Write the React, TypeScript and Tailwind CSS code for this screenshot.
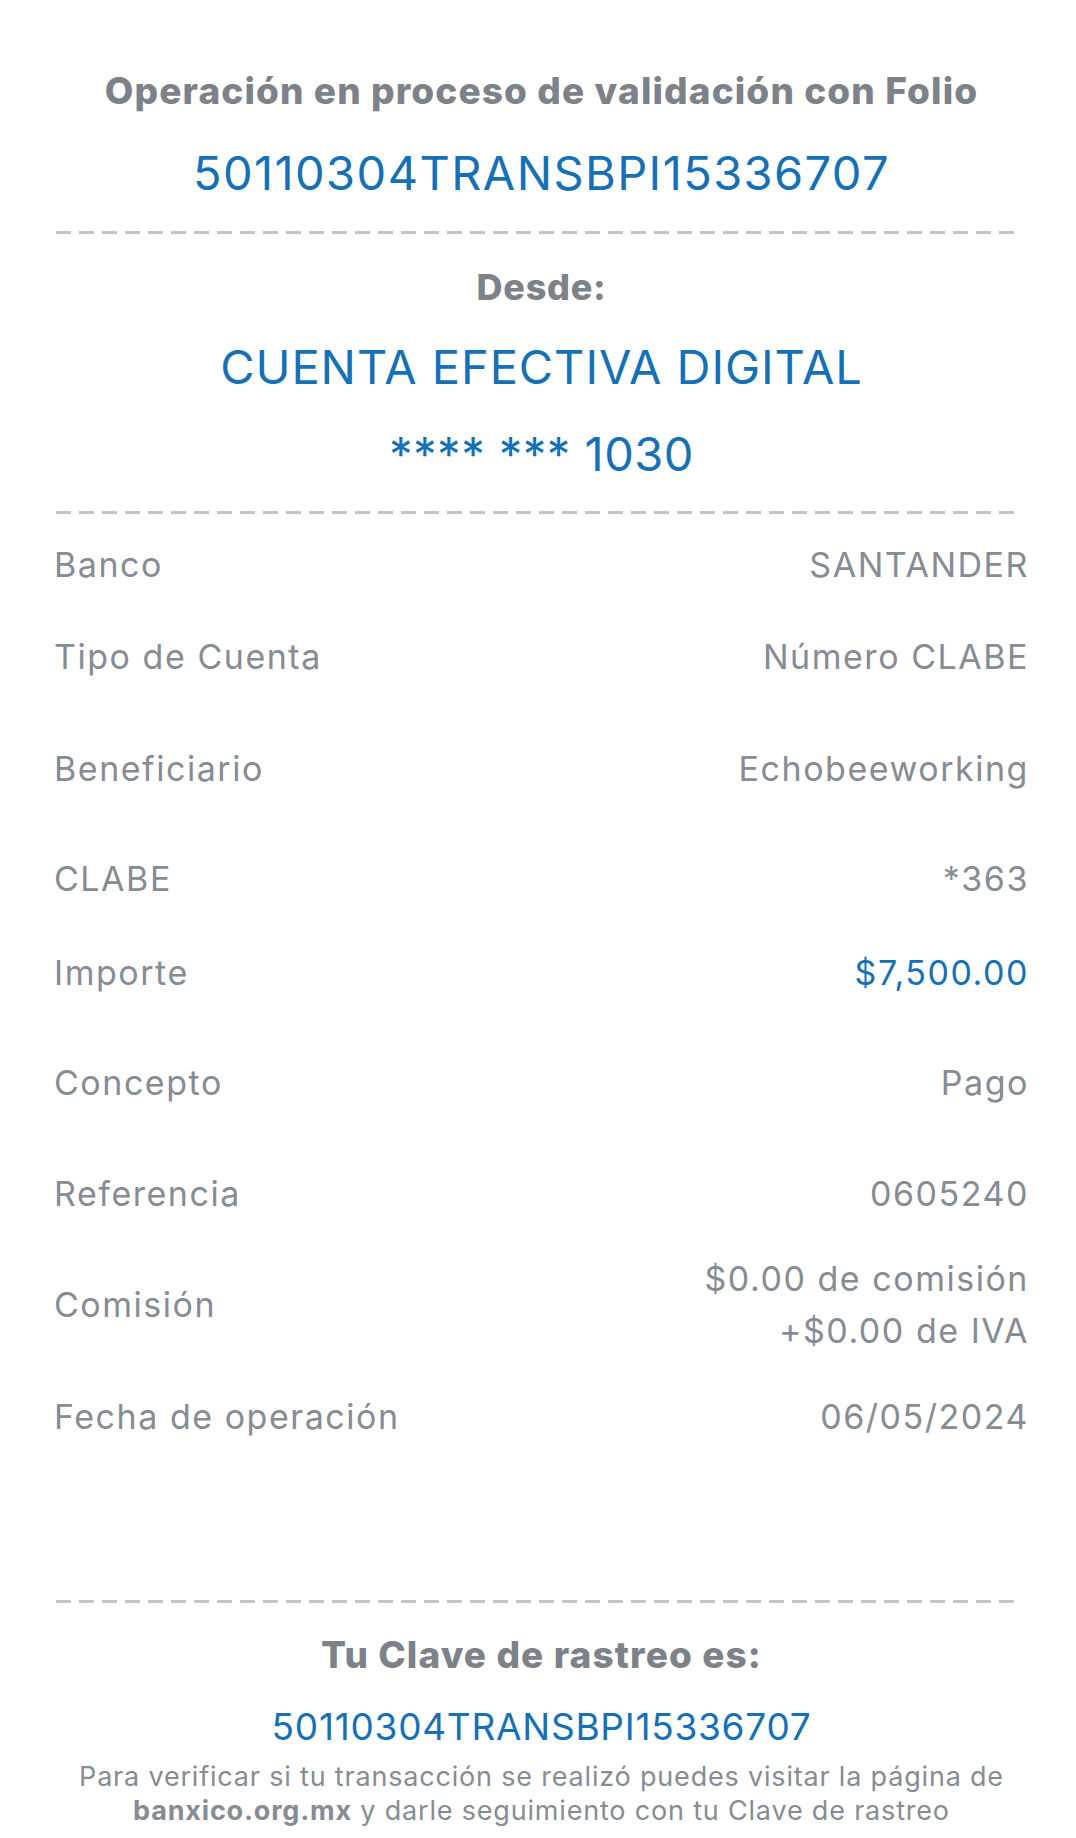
const FOLIO = "50110304TRANSBPI15336707";

const Dash = ({ className = "" }: { className?: string }) => (
  <div
    className={`ml-[2px] mr-[9px] h-[3px] bg-[repeating-linear-gradient(90deg,#c3c4c6_0px,#c3c4c6_15px,transparent_15px,transparent_23px)] ${className}`}
  />
);

interface RowProps {
  label: string;
  value: React.ReactNode;
  blue?: boolean;
  className?: string;
}

const Row = ({ label, value, blue, className = "" }: RowProps) => (
  <div className={`flex items-center justify-between ${className}`}>
    <span className="text-[34px] leading-[44px] tracking-[0.045em] text-[#868c94]">{label}</span>
    <span
      className={`text-right text-[34px] leading-[44px] tracking-[0.045em] ${blue ? "text-[#1670b5]" : "text-[#868c94]"}`}
    >
      {value}
    </span>
  </div>
);

const App = () => {
  return (
    <div className="min-h-[1838px] bg-white pl-[54px] pr-[47px] font-['Inter',sans-serif]">
      <div className="flex flex-col items-center pt-[70px]">
        <h1 className="whitespace-nowrap text-[37px] font-extrabold leading-[42px] tracking-[0.03em] text-[#7d8289]">
          Operación en proceso de validación con Folio
        </h1>
        <p className="mt-[33px] text-[47px] leading-[56px] tracking-[0.03em] text-[#1670b5]">{FOLIO}</p>
      </div>

      <Dash className="mt-[30px]" />

      <div className="flex flex-col items-center">
        <h2 className="mt-[32px] text-[36px] font-extrabold leading-[42px] tracking-[0.02em] text-[#7d8289]">
          Desde:
        </h2>
        <p className="mt-[31px] text-[47px] leading-[56px] tracking-[0.02em] text-[#1670b5]">
          CUENTA EFECTIVA DIGITAL
        </p>
        <p className="mt-[31px] text-[47px] leading-[56px] tracking-[0.01em] text-[#1670b5]">**** *** 1030</p>
      </div>

      <Dash className="mt-[29px]" />

      <div className="flex flex-col">
        <Row label="Banco" value="SANTANDER" className="mt-[29px]" />
        <Row label="Tipo de Cuenta" value="Número CLABE" className="mt-[48px]" />
        <Row label="Beneficiario" value="Echobeeworking" className="mt-[68px]" />
        <Row label="CLABE" value="*363" className="mt-[66px]" />
        <Row label="Importe" value="$7,500.00" blue className="mt-[50px]" />
        <Row label="Concepto" value="Pago" className="mt-[66px]" />
        <Row label="Referencia" value="0605240" className="mt-[67px]" />
        <div className="mt-[37px] flex items-center justify-between">
          <span className="text-[34px] leading-[44px] tracking-[0.045em] text-[#868c94]">Comisión</span>
          <div className="flex flex-col items-end text-[34px] leading-[52px] tracking-[0.045em] text-[#868c94]">
            <span>$0.00 de comisión</span>
            <span>+$0.00 de IVA</span>
          </div>
        </div>
        <Row label="Fecha de operación" value="06/05/2024" className="mt-[38px]" />
      </div>

      <Dash className="mt-[161px]" />

      <div className="flex flex-col items-center">
        <h2 className="mt-[31px] text-[37px] font-extrabold leading-[42px] tracking-[0.03em] text-[#7d8289]">
          Tu Clave de rastreo es:
        </h2>
        <p className="mt-[29px] text-[37px] leading-[44px] tracking-[0.02em] text-[#1670b5]">{FOLIO}</p>
        <p className="mt-[11px] whitespace-nowrap text-center text-[27px] leading-[34px] tracking-[0.03em] text-[#868c94]">
          Para verificar si tu transacción se realizó puedes visitar la página de
          <br />
          <span className="font-bold">banxico.org.mx</span> y darle seguimiento con tu Clave de rastreo
        </p>
      </div>
    </div>
  );
};

export default App;
